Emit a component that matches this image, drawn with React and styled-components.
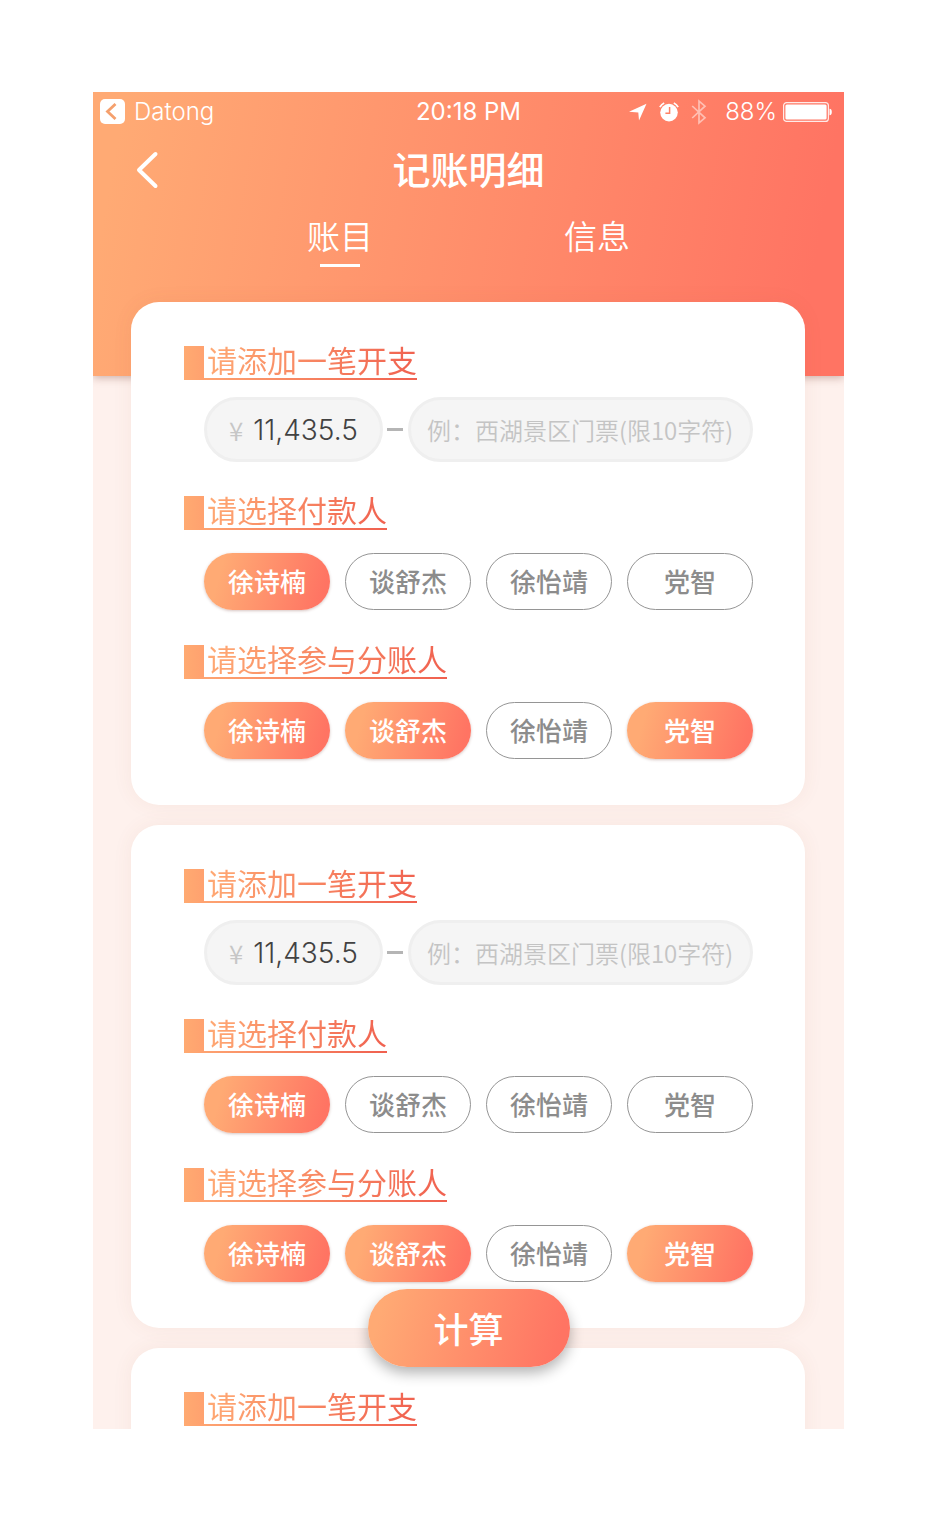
import React, { useState } from "react";
import styled, { createGlobalStyle, css } from "styled-components";

const warm = "#ffaa74";
const coral = "#ff7463";
const latin = `Inter, "Noto Sans CJK SC", sans-serif`;
const chinese = `"Noto Sans CJK SC", sans-serif`;

const GlobalStyle = createGlobalStyle`
  *, *::before, *::after { box-sizing: border-box; }
  body { margin: 0; background: #fff; font-family: ${chinese}; }
  button, input { font: inherit; margin: 0; }
  button { border: 0; padding: 0; background: none; cursor: pointer; }
  h1, h2 { margin: 0; font-weight: 400; }
`;

const Page = styled.div`
  min-height: 100vh;
  padding: 92px 91px 90px 93px;
`;

const Screen = styled.div`
  position: relative;
  height: calc(100vh - 182px);
  overflow: hidden;
  background: #fef1ed;
`;

const Header = styled.header`
  height: 284px;
  color: #fff;
  background: linear-gradient(100deg, ${warm} 4%, ${coral} 94%);
  box-shadow: 0 2px 8px rgba(120, 60, 50, 0.35);
`;

const StatusBar = styled.div`
  display: grid;
  grid-template-columns: 1fr auto 1fr;
  align-items: center;
  height: 39px;
  font-family: ${latin};
  font-size: 24px;
  line-height: 39px;
`;

const StatusSide = styled.div`
  display: flex;
  align-items: center;
  justify-content: ${(p) => (p.$end ? "flex-end" : "flex-start")};
  gap: ${(p) => (p.$end ? "6px" : "9px")};
  padding: 0 12px 0 7px;
  font-weight: 300;
`;

const Clock = styled.time`
  font-weight: 400;
`;

const StatusIcons = styled.div`
  display: flex;
  align-items: center;
  gap: 12px;
  margin-right: 12px;
`;

const TitleBar = styled.div`
  display: grid;
  grid-template-columns: 1fr auto 1fr;
  align-items: center;
  height: 78px;
  padding: 0 42px;
`;

const BackButton = styled.button`
  display: flex;
  width: 26px;
  height: 40px;
  color: inherit;
  align-items: center;
`;

const Title = styled.h1`
  padding-bottom: 4px;
  font-size: 38px;
  font-weight: 500;
  line-height: 56px;
`;

const Tabs = styled.nav`
  display: flex;
  justify-content: center;
  gap: 191px;
`;

const Tab = styled.a`
  display: flex;
  flex-direction: column;
  align-items: center;
  gap: 3px;
  color: #fff;
  font-size: 33px;
  font-weight: 350;
  line-height: 52px;
  text-decoration: none;

  &::after {
    content: "";
    width: 40px;
    height: 3px;
    background: ${(p) => (p.$active ? "#fff" : "transparent")};
  }
`;

const CardList = styled.main`
  position: relative;
  display: flex;
  flex-direction: column;
  gap: 20px;
  margin-top: -74px;
  padding: 0 39px 0 38px;
`;

const Card = styled.section`
  display: flex;
  flex-direction: column;
  padding: 44px 52px 46px 53px;
  border-radius: 28px;
  background: #fff;
  box-shadow: 0 0 20px rgba(150, 80, 60, 0.07);
`;

const Heading = styled.h2`
  display: flex;
  align-self: flex-start;
  gap: 3px;
  height: 34px;
  background: linear-gradient(90deg, ${warm}, #f0604f) bottom / 100% 2px no-repeat;

  &::before {
    content: "";
    width: 20px;
    background: linear-gradient(90deg, #ffaa71, #ffa16f);
  }
`;

const HeadingText = styled.span`
  font-size: 30px;
  line-height: 26px;
  color: transparent;
  background: linear-gradient(100deg, ${warm}, #f0604f);
  -webkit-background-clip: text;
  background-clip: text;
`;

const ExpenseRow = styled.div`
  display: flex;
  align-items: center;
  margin: 17px 0 34px 20px;
`;

const Field = styled.label`
  display: flex;
  align-items: center;
  gap: 10px;
  height: 65px;
  padding: 0 10px 0 16px;
  border: 3px solid #efefef;
  border-radius: 33px;
  background: #f5f5f5;
  color: #c6c6c6;
  ${(p) =>
    p.$amount
      ? css`
          flex: 0 0 179px;
          padding-left: 22px;
          font-size: 26px;
          font-weight: 350;
        `
      : css`
          flex: 1;
          min-width: 0;
        `}
`;

const FieldInput = styled.input`
  flex: 1;
  width: 0;
  min-width: 0;
  height: ${(p) => (p.$amount ? "38px" : "40px")};
  padding: 0;
  border: 0;
  outline: 0;
  background: none;
  color: #424242;
  font-family: ${(p) => (p.$amount ? latin : chinese)};
  font-size: ${(p) => (p.$amount ? "28px" : "24px")};
  font-weight: 350;

  &::placeholder {
    color: #c4c4c4;
    opacity: 1;
  }
`;

const Dash = styled.span`
  width: 16px;
  height: 3px;
  margin: 0 5px 0 4px;
  background: #b5b5b5;
`;

const People = styled.div`
  display: grid;
  grid-template-columns: repeat(4, 1fr);
  gap: 15px;
  margin: 23px 0 ${(p) => (p.$last ? "0" : "35px")} 20px;
`;

const Chip = styled.button`
  height: 57px;
  padding-bottom: 2px;
  border-radius: 29px;
  font-size: 26px;
  font-weight: 500;
  line-height: 38px;
  ${(p) =>
    p.$selected
      ? css`
          color: #fff;
          background: linear-gradient(105deg, ${warm} 15%, ${coral} 92%);
          box-shadow: 0 1px 3px rgba(120, 60, 50, 0.3);
        `
      : css`
          color: #8c8c8c;
          background: #fff;
          border: 1px solid #959595;
        `}
`;

const CalculateButton = styled.button`
  position: absolute;
  bottom: 62px;
  left: 50%;
  width: 202px;
  height: 78px;
  padding-bottom: 2px;
  transform: translateX(-50%);
  border-radius: 39px;
  color: #fff;
  font-size: 35px;
  font-weight: 500;
  background: linear-gradient(105deg, ${warm} 8%, ${coral} 92%);
  box-shadow: 0 6px 14px rgba(0, 0, 0, 0.3);
`;

const people = ["徐诗楠", "谈舒杰", "徐怡靖", "党智"];

function ReturnIcon() {
  return (
    <svg width="25" height="25" viewBox="0 0 25 25" aria-hidden="true">
      <rect width="25" height="25" rx="5" fill="#fff" />
      <path d="M15.500 5 7.500 12.500l8 7.500" fill="none" stroke="#f5a06d" strokeWidth="2.8" />
    </svg>
  );
}

function LocationIcon() {
  return (
    <svg width="18" height="18" viewBox="0 0 18 18" aria-hidden="true">
      <path d="M17.5.7 10 17.4 9.3 9.4 0 8.8Z" fill="#fff" />
    </svg>
  );
}

function AlarmIcon() {
  return (
    <svg width="20" height="20" viewBox="0 0 20 20" aria-hidden="true">
      <circle cx="10" cy="10.6" r="8.8" fill="#fff" />
      <path d="M.9 5.2A9 9 0 0 1 5.2 1M14.8 1a9 9 0 0 1 4.3 4.2" fill="none" stroke="#fff" strokeWidth="1.8" />
      <path d="M10.6 5v6.3H6.4" fill="none" stroke="#ff8165" strokeWidth="1.5" />
    </svg>
  );
}

function BluetoothIcon() {
  return (
    <svg width="16" height="26" viewBox="0 0 16 26" aria-hidden="true">
      <path
        d="m1.2 7 12.8 11.8L8 24V2l6 5.2L1.2 19"
        fill="none"
        stroke="#fff"
        strokeOpacity=".5"
        strokeWidth="1.7"
      />
    </svg>
  );
}

function BatteryIcon() {
  return (
    <svg width="49" height="20" viewBox="0 0 49 20" aria-hidden="true">
      <rect x=".6" y=".6" width="44.8" height="18.8" rx="3" fill="none" stroke="#fff" strokeOpacity=".85" strokeWidth="1.2" />
      <rect x="2.4" y="2.4" width="41.2" height="15.2" rx="1.5" fill="#fff" />
      <path d="M46.5 6.8c1.8.2 2.3 1.2 2.3 3.2s-.5 3-2.3 3.2Z" fill="#fff" />
    </svg>
  );
}

function PeoplePicker({ label, initial, last }) {
  const [selected, setSelected] = useState(initial);
  const toggle = (name) =>
    setSelected((now) => (now.includes(name) ? now.filter((n) => n !== name) : [...now, name]));
  return (
    <>
      <Heading>
        <HeadingText>{label}</HeadingText>
      </Heading>
      <People role="group" aria-label={label} $last={last}>
        {people.map((name) => (
          <Chip
            key={name}
            type="button"
            $selected={selected.includes(name)}
            aria-pressed={selected.includes(name)}
            onClick={() => toggle(name)}
          >
            {name}
          </Chip>
        ))}
      </People>
    </>
  );
}

function ExpenseCard({ children }) {
  return (
    <Card>
      <Heading>
        <HeadingText>请添加一笔开支</HeadingText>
      </Heading>
      {children}
    </Card>
  );
}

function ExpenseForm() {
  return (
    <>
      <ExpenseRow>
        <Field $amount>
          <span>¥</span>
          <FieldInput $amount aria-label="金额" defaultValue="11,435.5" />
        </Field>
        <Dash />
        <Field>
          <FieldInput aria-label="开支说明" maxLength={10} placeholder="例：西湖景区门票(限10字符)" />
        </Field>
      </ExpenseRow>
      <PeoplePicker label="请选择付款人" initial={["徐诗楠"]} />
      <PeoplePicker label="请选择参与分账人" initial={["徐诗楠", "谈舒杰", "党智"]} last />
    </>
  );
}

export default function App() {
  return (
    <Page>
      <GlobalStyle />
      <Screen>
        <Header>
          <StatusBar>
            <StatusSide>
              <ReturnIcon />
              <span>Datong</span>
            </StatusSide>
            <Clock>20:18 PM</Clock>
            <StatusSide $end>
              <StatusIcons>
                <LocationIcon />
                <AlarmIcon />
                <BluetoothIcon />
              </StatusIcons>
              <span>88%</span>
              <BatteryIcon />
            </StatusSide>
          </StatusBar>
          <TitleBar>
            <BackButton type="button" aria-label="返回">
              <svg width="24" height="38" viewBox="0 0 24 38" aria-hidden="true">
                <path d="M20.500 3 4 19l16.500 16" fill="none" stroke="#fff" strokeWidth="4" strokeLinecap="round" strokeLinejoin="round" />
              </svg>
            </BackButton>
            <Title>记账明细</Title>
          </TitleBar>
          <Tabs>
            <Tab href="#items" $active aria-current="page">账目</Tab>
            <Tab href="#info">信息</Tab>
          </Tabs>
        </Header>
        <CardList>
          <ExpenseCard>
            <ExpenseForm />
          </ExpenseCard>
          <ExpenseCard>
            <ExpenseForm />
          </ExpenseCard>
          <ExpenseCard />
        </CardList>
        <CalculateButton type="button">计算</CalculateButton>
      </Screen>
    </Page>
  );
}
